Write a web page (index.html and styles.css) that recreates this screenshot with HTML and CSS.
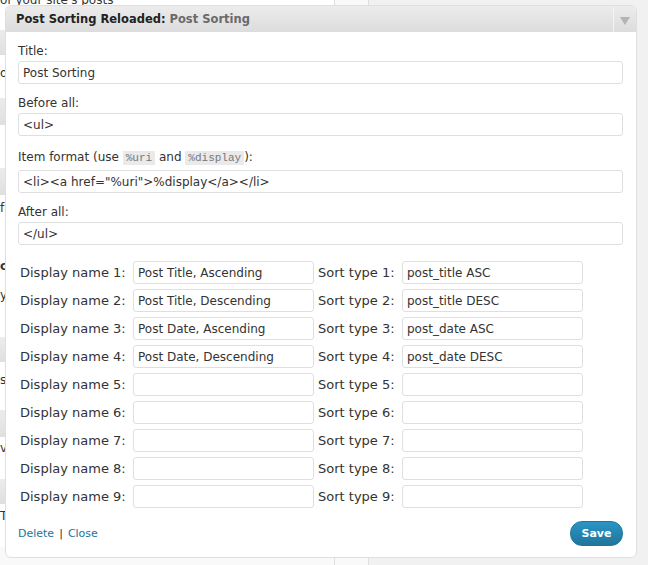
FILE: index.html
```html
<!DOCTYPE html>
<html lang="en">
<head>
<meta charset="utf-8">
<title>Post Sorting Reloaded widget</title>
<link rel="stylesheet" href="styles.css">
</head>
<body>
<div class="page">
  <div class="backdrop">
    <div class="widget-list">
      <div class="bg-top"><span class="bg-line bg-cut">of your site's posts</span></div>
      <div class="bg-head"></div>
      <div class="bg-desc h43"><span class="bg-line pt10">or comments</span></div>
      <div class="bg-head h27"></div>
      <div class="bg-desc h43"></div>
      <div class="bg-head h27"></div>
      <div class="bg-desc h60"><span class="bg-line pt5">from your site</span></div>
      <div class="bg-desc h82"><span class="bg-line bold">custom menu</span><span class="bg-line pt13">your sidebar</span></div>
      <div class="bg-head h25"></div>
      <div class="bg-desc h48"><span class="bg-line pt10">site's tags</span></div>
      <div class="bg-head h27"></div>
      <div class="bg-desc h42"><span class="bg-line pt3">very recent</span></div>
      <div class="bg-head h25"></div>
      <div class="bg-desc h43"><span class="bg-line pt4">The calendar</span></div>
    </div>
    <div class="side-col"></div>
    <div class="rest"></div>
  </div>

  <div class="dialog">
    <div class="dialog-head">
      <h3 class="dialog-title">Post Sorting Reloaded:<span class="in-title"> Post Sorting</span></h3>
      <div class="toggle"><span class="arrow"></span></div>
    </div>
    <div class="dialog-body">
      <div class="field">
        <label class="field-label" for="f-title">Title:</label>
        <input class="text-input" id="f-title" type="text" value="Post Sorting">
      </div>
      <div class="field">
        <label class="field-label" for="f-before">Before all:</label>
        <input class="text-input" id="f-before" type="text" value="&lt;ul&gt;">
      </div>
      <div class="field">
        <label class="field-label tall" for="f-item">Item format (use <code class="snippet">%uri</code> and <code class="snippet">%display</code>):</label>
        <input class="text-input" id="f-item" type="text" value="&lt;li&gt;&lt;a href=&quot;%uri&quot;&gt;%display&lt;/a&gt;&lt;/li&gt;">
      </div>
      <div class="field">
        <label class="field-label" for="f-after">After all:</label>
        <input class="text-input" id="f-after" type="text" value="&lt;/ul&gt;">
      </div>

      <div class="sort-grid">
        <label class="grid-label">Display name 1:</label><input class="text-input cell" type="text" value="Post Title, Ascending">
        <label class="grid-label">Sort type 1:</label><input class="text-input cell" type="text" value="post_title ASC">
        <label class="grid-label">Display name 2:</label><input class="text-input cell" type="text" value="Post Title, Descending">
        <label class="grid-label">Sort type 2:</label><input class="text-input cell" type="text" value="post_title DESC">
        <label class="grid-label">Display name 3:</label><input class="text-input cell" type="text" value="Post Date, Ascending">
        <label class="grid-label">Sort type 3:</label><input class="text-input cell" type="text" value="post_date ASC">
        <label class="grid-label">Display name 4:</label><input class="text-input cell" type="text" value="Post Date, Descending">
        <label class="grid-label">Sort type 4:</label><input class="text-input cell" type="text" value="post_date DESC">
        <label class="grid-label">Display name 5:</label><input class="text-input cell" type="text" value="">
        <label class="grid-label">Sort type 5:</label><input class="text-input cell" type="text" value="">
        <label class="grid-label">Display name 6:</label><input class="text-input cell" type="text" value="">
        <label class="grid-label">Sort type 6:</label><input class="text-input cell" type="text" value="">
        <label class="grid-label">Display name 7:</label><input class="text-input cell" type="text" value="">
        <label class="grid-label">Sort type 7:</label><input class="text-input cell" type="text" value="">
        <label class="grid-label">Display name 8:</label><input class="text-input cell" type="text" value="">
        <label class="grid-label">Sort type 8:</label><input class="text-input cell" type="text" value="">
        <label class="grid-label">Display name 9:</label><input class="text-input cell" type="text" value="">
        <label class="grid-label">Sort type 9:</label><input class="text-input cell" type="text" value="">
      </div>

      <div class="dialog-foot">
        <div class="foot-links"><a class="link" href="#">Delete</a><span class="sep">|</span><a class="link" href="#">Close</a></div>
        <button class="save-btn" type="button">Save</button>
      </div>
    </div>
  </div>
</div>
</body>
</html>
```

FILE: styles.css
```css
* { box-sizing: border-box; }

html, body {
  margin: 0;
  padding: 0;
}

body {
  width: 648px;
  height: 565px;
  overflow: hidden;
  background: #f1f1f1;
  font-family: "DejaVu Sans", Verdana, sans-serif;
  color: #333;
}

.page {
  position: relative;
  width: 648px;
  height: 565px;
}

/* ---------- backdrop (admin page behind the widget) ---------- */
.backdrop {
  display: flex;
  height: 565px;
}

.widget-list {
  width: 335px;
  display: flex;
  flex-direction: column;
  background: #f9f9f9;
  border-right: 1px solid #dfdfdf;
}

.bg-top {
  height: 30px;
  background: #fff;
  overflow: hidden;
}

.bg-line {
  display: block;
  font-size: 12px;
  line-height: 16px;
  color: #333;
  white-space: nowrap;
}

.bg-cut { margin-top: -8px; }
.pt3 { margin-top: 3px; }
.pt4 { margin-top: 4px; }
.pt5 { margin-top: 5px; }
.pt10 { margin-top: 10px; }
.pt13 { margin-top: 13px; }
.bold { font-weight: bold; margin-top: 3px; }

.bg-head {
  height: 25px;
  background: linear-gradient(#ececec, #dfdfdf);
}

.bg-desc {
  background: #fff;
  overflow: hidden;
}

.h25 { height: 25px; }
.h27 { height: 27px; }
.h42 { height: 42px; }
.h43 { height: 43px; }
.h48 { height: 48px; }
.h60 { height: 60px; }
.h82 { height: 82px; }

.side-col {
  width: 34px;
  background: #f9f9f9;
  border-right: 1px solid #dfdfdf;
}

.rest {
  flex: 1;
  background: #f1f1f1;
}

/* ---------- widget dialog ---------- */
.dialog {
  position: absolute;
  left: 5px;
  top: 5px;
  width: 632px;
  background: #fff;
  border: 1px solid #dfdfdf;
  border-radius: 6px;
  overflow: hidden;
}

.dialog-head {
  display: flex;
  height: 26px;
  background: linear-gradient(#ececec, #dcdcdc);
}

.dialog-title {
  flex: 1;
  margin: 0;
  padding-left: 10px;
  font-size: 11.5px;
  line-height: 26px;
  font-weight: bold;
  color: #222;
  white-space: nowrap;
}

.in-title {
  color: #6a6a6a;
}

.toggle {
  width: 23px;
  border-left: 1px solid #f4f4f4;
  display: flex;
  align-items: center;
  justify-content: center;
}

.arrow {
  width: 0;
  height: 0;
  margin-top: 3px;
  border-left: 5px solid transparent;
  border-right: 5px solid transparent;
  border-top: 8px solid #b3b3b3;
}

.dialog-body {
  padding: 11px 13px 11px 12px;
}

.field {
  margin-bottom: 11px;
}

.field-label {
  display: block;
  font-size: 12px;
  line-height: 16px;
  margin-bottom: 2px;
  color: #333;
}

.field-label.tall {
  line-height: 20px;
}

.snippet {
  font-family: "Liberation Mono", "DejaVu Sans Mono", monospace;
  font-size: 11px;
  color: #777;
  background: #eaeaea;
  padding: 1px 3px;
}

.text-input {
  display: block;
  width: 100%;
  height: 23px;
  margin: 0;
  padding: 0 4px;
  border: 1px solid #dfdfdf;
  border-radius: 3px;
  background: #fff;
  font-family: "DejaVu Sans", Verdana, sans-serif;
  font-size: 12px;
  color: #333;
  outline: none;
}

.sort-grid {
  display: grid;
  grid-template-columns: 113px 185px 84px 181px;
  grid-auto-rows: 23px;
  row-gap: 5px;
  align-items: center;
  margin: 16px 0 0 2px;
}

.grid-label {
  font-size: 13px;
  line-height: 16px;
  color: #333;
  white-space: nowrap;
}

.text-input.cell {
  width: 181px;
}

.dialog-foot {
  display: flex;
  justify-content: space-between;
  align-items: center;
  margin-top: 13px;
  height: 25px;
}

.foot-links {
  font-size: 11px;
  line-height: 16px;
  color: #333;
}

.link {
  color: #21759b;
  text-decoration: none;
}

.sep {
  margin: 0 5px;
}

.save-btn {
  width: 53px;
  height: 25px;
  padding: 0;
  border: 1px solid #21759b;
  border-radius: 12px;
  background: linear-gradient(#2a95c5, #21759b);
  color: #fff;
  font-family: "DejaVu Sans", Verdana, sans-serif;
  font-size: 11px;
  font-weight: bold;
  cursor: pointer;
}
```
